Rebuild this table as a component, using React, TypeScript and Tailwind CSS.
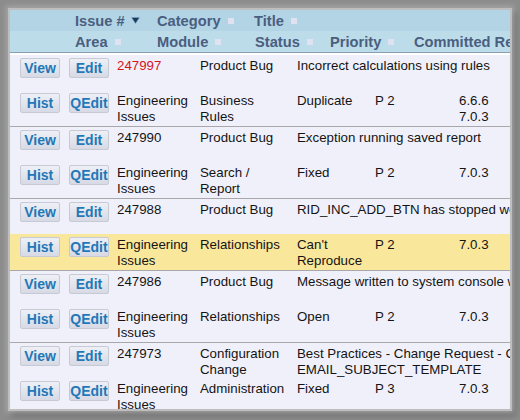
import React from "react";

type Issue = {
  id: string;
  idRed?: boolean;
  category: string[];
  title: string[];
  area: string[];
  module: string[];
  status: string[];
  priority: string;
  release: string[];
  highlight?: boolean;
};

const issues: Issue[] = [
  {
    id: "247997",
    idRed: true,
    category: ["Product Bug"],
    title: ["Incorrect calculations using rules"],
    area: ["Engineering", "Issues"],
    module: ["Business", "Rules"],
    status: ["Duplicate"],
    priority: "P 2",
    release: ["6.6.6", "7.0.3"],
  },
  {
    id: "247990",
    category: ["Product Bug"],
    title: ["Exception running saved report"],
    area: ["Engineering", "Issues"],
    module: ["Search /", "Report"],
    status: ["Fixed"],
    priority: "P 2",
    release: ["7.0.3"],
  },
  {
    id: "247988",
    category: ["Product Bug"],
    title: ["RID_INC_ADD_BTN has stopped working"],
    area: ["Engineering", "Issues"],
    module: ["Relationships"],
    status: ["Can't", "Reproduce"],
    priority: "P 2",
    release: ["7.0.3"],
    highlight: true,
  },
  {
    id: "247986",
    category: ["Product Bug"],
    title: ["Message written to system console when saving"],
    area: ["Engineering", "Issues"],
    module: ["Relationships"],
    status: ["Open"],
    priority: "P 2",
    release: ["7.0.3"],
  },
  {
    id: "247973",
    category: ["Configuration", "Change"],
    title: ["Best Practices - Change Request - Configure", "EMAIL_SUBJECT_TEMPLATE"],
    area: ["Engineering", "Issues"],
    module: ["Administration"],
    status: ["Fixed"],
    priority: "P 3",
    release: ["7.0.3"],
  },
];

function Btn({ label }: { label: string }) {
  return (
    <div className="w-[40px] h-[20px] flex items-center justify-center rounded-[2px] border border-[#c6cad5] bg-gradient-to-b from-[#eef0f6] to-[#d7dae5] text-[14px] font-bold text-[#1f78b7] leading-none">
      {label}
    </div>
  );
}

function Lines({ lines, className = "" }: { lines: string[]; className?: string }) {
  return (
    <div className={"whitespace-nowrap " + className}>
      {lines.map((l, i) => (
        <div key={i}>{l}</div>
      ))}
    </div>
  );
}

// little "unsorted" marker next to each column label
function Sq() {
  return <span className="inline-block ml-[7px] w-[6px] h-[6px] bg-[#e0e1f1]" />;
}

function HeadCell({ label, w, sort }: { label: string; w?: string; sort?: boolean }) {
  return (
    <div className={"flex items-center shrink-0 whitespace-nowrap " + (w ?? "")}>
      <span>{label}</span>
      {sort ? (
        <svg className="ml-[6px]" width="9" height="7" viewBox="0 0 9 7">
          <polygon points="0.5,0.5 8.5,0.5 4.5,6.5" fill="#173b5a" stroke="#7fa8c8" strokeWidth="0.6" />
        </svg>
      ) : (
        <Sq />
      )}
    </div>
  );
}

function Record({ issue }: { issue: Issue }) {
  return (
    <div className="border-b border-[#a8a8ac]">
      <div className="flex h-[35px] pt-[3px]">
        <div className="w-[10px] shrink-0" />
        <div className="w-[49px] shrink-0"><Btn label="View" /></div>
        <div className="w-[48px] shrink-0"><Btn label="Edit" /></div>
        <Lines lines={[issue.id]} className={"w-[83px] shrink-0 " + (issue.idRed ? "text-[#d4141c]" : "")} />
        <Lines lines={issue.category} className="w-[97px] shrink-0" />
        <Lines lines={issue.title} className="shrink-0" />
      </div>
      <div className={"flex h-[36px] pt-[3px] " + (issue.highlight ? "bg-[#f9e79c]" : "")}>
        <div className="w-[10px] shrink-0" />
        <div className="w-[49px] shrink-0"><Btn label="Hist" /></div>
        <div className="w-[48px] shrink-0"><Btn label="QEdit" /></div>
        <Lines lines={issue.area} className="w-[83px] shrink-0" />
        <Lines lines={issue.module} className="w-[97px] shrink-0" />
        <Lines lines={issue.status} className="w-[78px] shrink-0" />
        <Lines lines={[issue.priority]} className="w-[84px] shrink-0" />
        <Lines lines={issue.release} className="shrink-0" />
      </div>
    </div>
  );
}

export default function App() {
  return (
    <div className="w-[520px] h-[420px] bg-[#8c8c8c] p-[10px] overflow-hidden font-['Liberation_Sans',Arial,sans-serif]">
      <div className="w-[500px] h-[399px] overflow-hidden bg-[#f0f0fa] shadow-[0_0_0_2px_#bebebe,0_0_5px_4px_#a8a8a8,3px_4px_6px_2px_rgba(0,0,0,0.35)]">
        {/* header */}
        <div className="text-[14.67px] font-bold text-[#4a5e7f] leading-none">
          <div className="flex items-center h-[21px] pt-[1px] pl-[65px] bg-[#b3d4e5]">
            <HeadCell label="Issue #" w="w-[82px]" sort />
            <HeadCell label="Category" w="w-[97px]" />
            <HeadCell label="Title" />
          </div>
          <div className="flex items-center h-[22px] pt-[1px] pl-[65px] bg-[#bddcea] border-b border-[#8b9db1]">
            <HeadCell label="Area" w="w-[82px]" />
            <HeadCell label="Module" w="w-[98px]" />
            <HeadCell label="Status" w="w-[75px]" />
            <HeadCell label="Priority" w="w-[84px]" />
            <HeadCell label="Committed Release" />
          </div>
          <div className="h-[2px] bg-white" />
        </div>
        {/* rows */}
        <div className="text-[13.3px] leading-[15.5px] text-[#141414]">
          {issues.map((it) => (
            <Record key={it.id} issue={it} />
          ))}
        </div>
      </div>
    </div>
  );
}
